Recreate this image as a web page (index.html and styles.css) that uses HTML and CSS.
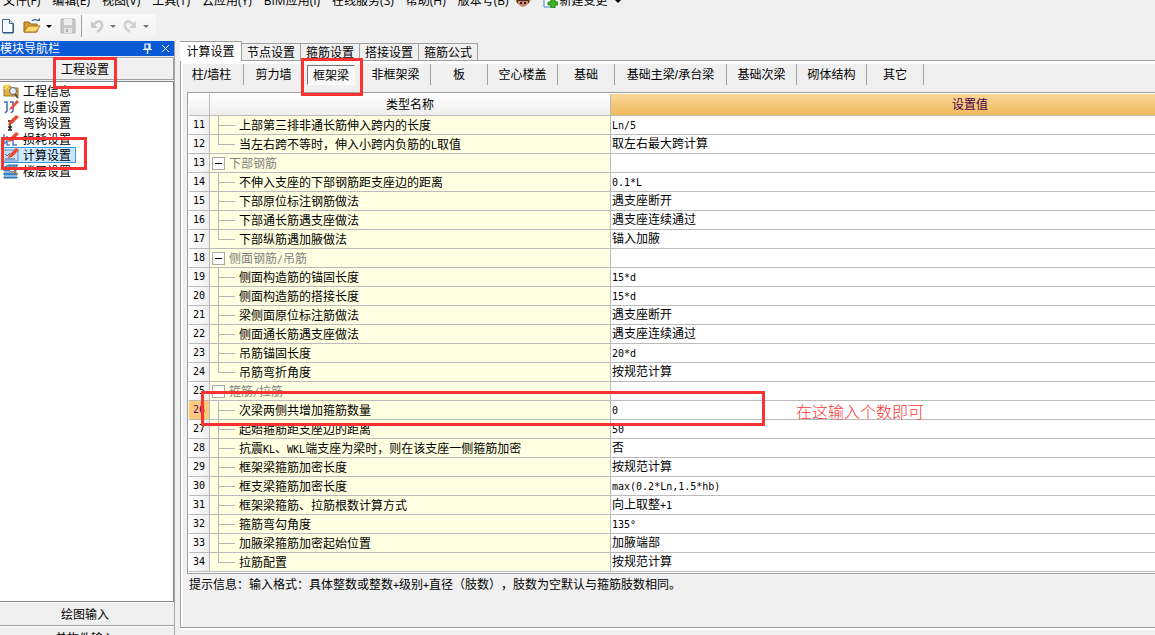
FILE: index.html
```html
<!DOCTYPE html>
<html lang="zh-CN">
<head>
<meta charset="utf-8">
<title>计算设置</title>
<link rel="stylesheet" href="styles.css">
</head>
<body>
<div class="app">
  <nav class="menubar">
    <button>文件(F)</button><button>编辑(E)</button><button>视图(V)</button><button>工具(T)</button><button>云应用(Y)</button><button>BIM应用(I)</button><button>在线服务(S)</button><button>帮助(H)</button><button>版本号(B)</button>
    <svg class="face" viewBox="0 0 16 16" width="16" height="16"><path d="M0 8Q0 1 8 1T16 8L13 11H3Z" fill="#e0a928"/><path d="M1 9Q8 4 15 9L13 12H3Z" fill="#522817"/><path d="M3 9H13V12Q8 18 3 12Z" fill="#c98a68"/><path d="M5 10h2v2H5zM9 10h2v2H9z" fill="#301b18"/></svg>
    <svg class="page" viewBox="0 0 15 16" width="15" height="16"><path d="M1 1H11V15H1Z" fill="#fff" stroke="#3b86c4"/><path d="M8 7h4v3h3v3h-3v3H8v-3H5v-3h3Z" fill="#3eb520" stroke="#218512"/></svg>
    <button>新建变更</button><i class="caret menu-caret"></i>
  </nav>
  <div class="toolbar">
    <div class="tools">
      <button aria-label="新建"><svg viewBox="0 0 16 16" width="16" height="16"><path d="M2.500 1.500H9.500L13.500 5.500V14.500H2.500Z" fill="#f7fbff" stroke="#496b91"/><path d="M9.500 1.500V5.500H13.500" fill="#c5dbf0" stroke="#496b91"/><path d="M13 6V15H3" fill="none" stroke="#23466f"/></svg></button>
      <button class="open" aria-label="打开"><svg viewBox="0 0 18 16" width="18" height="16"><path d="M1 14V4H6L8 6H14V14Z" fill="#d79c2e" stroke="#936719"/><path d="M1 14L5 8H17L13 14Z" fill="#ffd96e" stroke="#a8741c"/><path d="M9 3Q12 0 15 3" fill="none" stroke="#4770a0" stroke-width="1.500"/><path d="M13 3H17V0Z" fill="#4770a0"/></svg></button>
      <i class="caret"></i>
      <button class="save" aria-label="保存" disabled><svg viewBox="0 0 16 16" width="16" height="16"><path d="M1 1H15V15H1Z" fill="#c8c8c8" stroke="#b4b4b4"/><path d="M4 1H12V7H4Z" fill="#eee"/><path d="M4 10H12V15H4Z" fill="#e4e4e4"/><path d="M6 11H8V14H6Z" fill="#aaa"/></svg></button>
      <i class="divider"></i>
      <button aria-label="撤销" disabled><svg viewBox="0 0 16 16" width="16" height="16"><path d="M4 7Q11 0 13 6Q14 10 8 14" fill="none" stroke="#cacaca" stroke-width="2.500"/><path d="M2 3V10H9Z" fill="#cacaca"/></svg></button>
      <i class="caret dim"></i>
      <button aria-label="重做" disabled><svg viewBox="0 0 16 16" width="16" height="16"><path d="M12 7Q5 0 3 6Q2 10 8 14" fill="none" stroke="#d0d0d0" stroke-width="2.500"/><path d="M14 3V10H7Z" fill="#d0d0d0"/></svg></button>
      <i class="caret dim"></i>
    </div>
  </div>
  <div class="work">
    <aside class="sidebar">
      <header class="side-title"><span>模块导航栏</span>
        <svg viewBox="0 0 28 11" width="28" height="11"><path d="M3 1H8V6H3ZM7 1V6M1 6.500H10M5.500 7V11" fill="none" stroke="#fff" stroke-width="1.200"/><path d="M20 2L27 9M27 2L20 9" stroke="#fff"/></svg>
      </header>
      <button class="side-head">工程设置<i class="mark mark-head"></i></button>
      <ul class="tree">
        <li><svg viewBox="0 0 16 16" width="16" height="16"><path d="M1 3H7L9 5H15V13H1Z" fill="#e7b13c" stroke="#9c762a"/><path d="M3 0V7M0 3H7M1 1L6 6M6 1L1 6" stroke="#ffe567"/><circle cx="10" cy="8" r="3.500" fill="#e3f0ff" stroke="#67676e"/><path d="M12 11L15 15" stroke="#5c4a35" stroke-width="2"/></svg><a href="#">工程信息</a></li>
        <li><svg viewBox="0 0 16 16" width="16" height="16"><path d="M1 3H4V12L2 14M7 3H10V12L8 14" fill="none" stroke="#3d6ba8" stroke-width="1.500"/><path d="M7 9L14 1L16 3L9 10L6 11Z" fill="#e94b35"/></svg><a href="#">比重设置</a></li>
        <li><svg viewBox="0 0 16 16" width="16" height="16"><path d="M5 6H9M7 6V15M5 12H9M5 15H9" fill="none" stroke="#222" stroke-width="1.500"/><path d="M6 7L13 0L16 2L9 9L5 10Z" fill="#e94b35"/></svg><a href="#">弯钩设置</a></li>
        <li><svg viewBox="0 0 16 16" width="16" height="16"><path d="M1 3V13L4 10M4 5V14H7M10 9V14H14" fill="none" stroke="#567fb2" stroke-width="1.500"/><path d="M6 8L13 1L16 3L9 10L5 11Z" fill="#e94b35"/></svg><a href="#">损耗设置</a></li>
        <li class="selected"><svg viewBox="0 0 16 16" width="16" height="16"><path d="M0 3H15V14H0Z" fill="#c9def4" stroke="#668fc4"/><path d="M2 7L4 9L7 6M2 12H12" fill="none" stroke="#3f69a2"/><path d="M6 8L13 1L16 3L9 10L5 11Z" fill="#e94b35"/></svg><a href="#">计算设置</a><i class="mark mark-tree"></i></li>
        <li><svg viewBox="0 0 16 16" width="16" height="16"><path d="M0 5L5 2H15L12 5ZM1 6H13V8H1ZM1 10H14V12H1ZM1 14H14V15H1Z" fill="#4fa1df" stroke="#1e6daf"/><circle cx="9" cy="6" r="3" fill="#dceeff" stroke="#777"/><path d="M11 8L14 12" stroke="#ab7648" stroke-width="2"/></svg><a href="#">楼层设置</a></li>
      </ul>
      <div class="side-foot"><button>绘图输入</button><button>单构件输入</button></div>
    </aside>
    <main class="main">
      <div class="tabs"><button class="on">计算设置</button><button>节点设置</button><button>箍筋设置</button><button>搭接设置</button><button>箍筋公式</button></div>
      <section class="panel">
        <div class="parts">
          <button class="w60 first">柱/墙柱</button><button class="w60">剪力墙</button><button class="w57 pressed"><span>框架梁</span><i class="mark mark-part"></i></button><button class="w70">非框架梁</button><button class="w57">板</button><button class="w70">空心楼盖</button><button class="w57">基础</button><button class="w112">基础主梁/承台梁</button><button class="w70">基础次梁</button><button class="w70">砌体结构</button><button class="w57">其它</button>
        </div>
        <div class="grid">
          <table>
            <colgroup><col class="c-num"><col class="c-name"><col></colgroup>
            <thead><tr><th></th><th>类型名称</th><th class="val-head">设置值</th></tr></thead>
            <tbody>
              <tr><th>11</th><td class="leaf">上部第三排非通长筋伸入跨内的长度</td><td><b>Ln/5</b></td></tr>
              <tr><th>12</th><td class="leaf last">当左右跨不等时，伸入小跨内负筋的<b>L</b>取值</td><td>取左右最大跨计算</td></tr>
              <tr><th>13</th><td class="group"><button aria-label="折叠"></button>下部钢筋</td><td></td></tr>
              <tr><th>14</th><td class="leaf">不伸入支座的下部钢筋距支座边的距离</td><td><b>0.1*L</b></td></tr>
              <tr><th>15</th><td class="leaf">下部原位标注钢筋做法</td><td>遇支座断开</td></tr>
              <tr><th>16</th><td class="leaf">下部通长筋遇支座做法</td><td>遇支座连续通过</td></tr>
              <tr><th>17</th><td class="leaf last">下部纵筋遇加腋做法</td><td>锚入加腋</td></tr>
              <tr><th>18</th><td class="group"><button aria-label="折叠"></button>侧面钢筋<b>/</b>吊筋</td><td></td></tr>
              <tr><th>19</th><td class="leaf">侧面构造筋的锚固长度</td><td><b>15*d</b></td></tr>
              <tr><th>20</th><td class="leaf">侧面构造筋的搭接长度</td><td><b>15*d</b></td></tr>
              <tr><th>21</th><td class="leaf">梁侧面原位标注筋做法</td><td>遇支座断开</td></tr>
              <tr><th>22</th><td class="leaf">侧面通长筋遇支座做法</td><td>遇支座连续通过</td></tr>
              <tr><th>23</th><td class="leaf">吊筋锚固长度</td><td><b>20*d</b></td></tr>
              <tr><th>24</th><td class="leaf last">吊筋弯折角度</td><td>按规范计算</td></tr>
              <tr><th>25</th><td class="group"><button aria-label="折叠"></button>箍筋<b>/</b>拉筋</td><td></td></tr>
              <tr class="current"><th>26<i class="mark mark-row"></i></th><td class="leaf">次梁两侧共增加箍筋数量</td><td><b>0</b><span class="note">在这输入个数即可</span></td></tr>
              <tr><th>27</th><td class="leaf">起始箍筋距支座边的距离</td><td><b>50</b></td></tr>
              <tr><th>28</th><td class="leaf">抗震<b>KL</b>、<b>WKL</b>端支座为梁时，则在该支座一侧箍筋加密</td><td>否</td></tr>
              <tr><th>29</th><td class="leaf">框架梁箍筋加密长度</td><td>按规范计算</td></tr>
              <tr><th>30</th><td class="leaf">框支梁箍筋加密长度</td><td><b>max(0.2*Ln,1.5*hb)</b></td></tr>
              <tr><th>31</th><td class="leaf">框架梁箍筋、拉筋根数计算方式</td><td>向上取整<b>+1</b></td></tr>
              <tr><th>32</th><td class="leaf">箍筋弯勾角度</td><td><b>135°</b></td></tr>
              <tr><th>33</th><td class="leaf">加腋梁箍筋加密起始位置</td><td>加腋端部</td></tr>
              <tr><th>34</th><td class="leaf last">拉筋配置</td><td>按规范计算</td></tr>
            </tbody>
          </table>
        </div>
        <p class="hint">提示信息：输入格式：具体整数或整数<b>+</b>级别<b>+</b>直径（肢数），肢数为空默认与箍筋肢数相同。</p>
      </section>
    </main>
  </div>
</div>
</body>
</html>
```
FILE: styles.css
```css
* { box-sizing: border-box; }
body {
  margin: 0;
  overflow: hidden;
  background: #f0f0f0;
  color: #000;
  font: 12px/14px "Liberation Sans", "Noto Sans CJK SC", sans-serif;
  text-spacing-trim: space-all;
}
button { border: 0; padding: 0; background: none; color: inherit; font: inherit; white-space: nowrap; }
svg { display: block; flex: none; }
b { font: 10px/14px "DejaVu Sans Mono", monospace; }

.app { display: flex; flex-direction: column; height: 100vh; }

/* Menu and toolbar */
.menubar { display: flex; align-items: flex-end; flex: none; gap: 12px; height: 8px; padding-left: 3px; overflow: hidden; font-family: "Open Sans", "Noto Sans CJK SC", sans-serif; }
.menubar .face { margin-left: -6px; }
.menubar .page { margin-right: -10px; }
.caret { flex: none; border: 3px solid transparent; border-top-color: #000; border-bottom: 0; }
.caret.dim { border-top-color: #777; }
.menu-caret { margin: 0 0 5px -5px; }
.toolbar { flex: none; height: 33px; padding-top: 6px; }
.tools { display: flex; align-items: center; gap: 5px; width: 156px; height: 24px; background: linear-gradient(#fafafa, #f2f2f2); }
.tools .caret { margin-right: 1px; }
.open { margin-left: 2px; }
.save { margin-left: 2px; }
.divider { width: 1px; height: 22px; margin-right: 2px; background: #a0a0a0; }

/* Layout */
.work { display: flex; flex: 1; min-height: 0; gap: 5px; }
.sidebar { display: flex; flex-direction: column; flex: none; width: 175px; border-right: 1px solid #a5a5a5; }
.side-title { display: flex; justify-content: space-between; align-items: center; height: 15px; padding-right: 4px; background: #0a59d5; color: #fff; }
.side-head { position: relative; height: 23px; margin: 1px 0; padding: 2px 3px 0 0; border: 1px solid #a0a0a0; border-left: 0; box-shadow: inset 0 1px #fff; }
.tree { flex: 1; min-height: 0; margin: 0; padding: 1px 0 0 3px; border: 1px solid #828790; border-left: 0; background: #fff; list-style: none; }
.tree li { position: relative; display: flex; align-items: center; width: 73px; height: 16px; gap: 4px; }
.tree a { padding-top: 2px; color: #000; text-decoration: none; white-space: nowrap; }
.tree .selected { background: #cce8ff; outline: 1px solid #3399dd; outline-offset: -1px; }
.side-foot { display: flex; flex-direction: column; flex: none; height: 33px; overflow: hidden; }
.side-foot button { flex: none; height: 24px; padding: 2px 4px 0 0; border-bottom: 1px solid #a0a0a0; box-shadow: inset 0 1px #fff; }

.main { display: flex; flex-direction: column; flex: 1; min-width: 0; padding-bottom: 7px; }
.tabs { display: flex; align-items: flex-end; height: 19px; }
.tabs button { width: 59px; height: 17px; padding-top: 1px; border: 1px solid #a0a0a0; border-left: 0; border-bottom: 0; }
.tabs .on { position: relative; z-index: 1; width: 62px; height: 20px; margin-bottom: -1px; padding: 0; background: #fff; }
.panel { display: flex; flex-direction: column; flex: 1; min-height: 0; padding-left: 3px; border: 1px solid #a0a0a0; border-right: 0; box-shadow: inset 2px 3px #fff, 0 2px #fff; }

.parts { display: flex; height: 31px; padding-top: 3px; }
.parts button { position: relative; flex: none; height: 21px; border-right: 1px solid #a0a0a0; }
.parts .first { padding-right: 4px; }
.w57 { width: 57px; }
.w60 { width: 60px; }
.w70 { width: 70px; }
.w112 { width: 112px; }
.pressed span { display: block; height: 20px; margin: 0 5px 0 3px; padding-top: 3px; border: 1px solid #fff; border-top-color: #777; border-left-color: #777; background: #f8f8f8; }

/* Settings table */
.grid { margin-left: 3px; padding: 1px 0 1px 1px; border: 1px solid #a0a0a0; border-right: 0; background: #fff; }
table { width: 100%; table-layout: fixed; border-collapse: separate; border-spacing: 0; }
.c-num { width: 21px; }
.c-name { width: 401px; }
th, td { height: 19px; padding: 0 2px; border-right: 1px solid #bbb; border-bottom: 1px solid #bbb; text-align: left; font-weight: 400; white-space: nowrap; }
td:last-child { padding-left: 1px; border-right: 0; }
thead th { height: 22px; background: linear-gradient(#fff, #eee); text-align: center; }
thead .val-head { padding-left: 176px; border-right: 0; background: linear-gradient(#f9d699, #f0bc5b); color: #4a004a; }
tbody th { position: relative; padding: 0; background: linear-gradient(90deg, #fff, #eee); text-align: center; font: 10px/14px "DejaVu Sans Mono", monospace; }
.current th { background: #ffcb7b; color: #52006b; }
.leaf, .group { position: relative; padding-top: 2px; background: #ffffe1; }
.leaf { padding-left: 29px; }
.leaf::before, .leaf::after { content: ""; position: absolute; left: 8px; background: #b4b4b4; }
.leaf::before { top: 0; width: 1px; height: 19px; }
.leaf::after { top: 9px; width: 17px; height: 1px; }
.leaf.last::before { height: 9px; }
.group { padding-left: 19px; color: #808080; }
.group button { position: absolute; top: 3px; left: 2px; width: 13px; height: 13px; border: 1px solid #aaa; background: linear-gradient(#000, #000) center / 7px 1px no-repeat #fff; }
tbody td:last-child { position: relative; }
.note { position: absolute; top: 0; left: 185px; color: #fa3636; font-size: 16px; font-weight: 300; line-height: 24px; }
.hint { margin: 4px 0 0 5px; white-space: nowrap; }

/* Red callout frames */
.mark { position: absolute; z-index: 2; border: 3px solid #fa3232; pointer-events: none; }
.mark-head { top: -1px; left: 53px; width: 64px; height: 32px; }
.mark-tree { top: -10px; left: -2px; width: 86px; height: 33px; }
.mark-part { top: -6px; left: -3px; width: 62px; height: 38px; }
.mark-row { top: -10px; left: 12px; width: 564px; height: 35px; }
```
